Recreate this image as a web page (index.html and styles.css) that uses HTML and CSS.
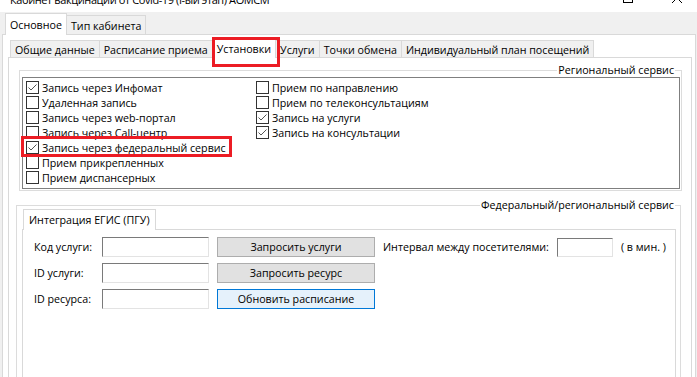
FILE: index.html
```html
<!DOCTYPE html>
<html lang="ru">
<head>
    <meta charset="UTF-8">
    <meta name="viewport" content="width=device-width, initial-scale=1.0">
    <title>Кабинет вакцинации от Covid-19</title>
    <link rel="stylesheet" href="styles.css">
</head>
<body>
    <!-- Заголовок окна (виден только низ) -->
    <div class="titlebar">
        <span class="title">Кабинет вакцинации от Covid-19 (I-ый этап) АОМСМ</span>
        <span class="controls">
            <svg class="ctl" width="10" height="10" viewBox="0 0 10 10"><rect x="0.5" y="0.5" width="9" height="9" fill="none" stroke="#000"/></svg>
            <svg class="ctl close" width="10" height="10" viewBox="0 0 10 10"><path d="M0 0L10 10M10 0L0 10" stroke="#000" fill="none"/></svg>
        </span>
    </div>

    <div class="window">
        <div class="tabstrip outer-tabs">
            <div class="tab active">Основное</div>
            <div class="tab">Тип кабинета</div>
        </div>

        <div class="outer-page">
            <div class="tabstrip inner-tabs">
                <div class="tab">Общие данные</div>
                <div class="tab">Расписание приема</div>
                <div class="tab active marked">Установки</div>
                <div class="tab">Услуги</div>
                <div class="tab">Точки обмена</div>
                <div class="tab">Индивидуальный план посещений</div>
            </div>

            <div class="inner-page">
                <!-- Региональный сервис -->
                <fieldset class="group regional">
                    <legend>Региональный сервис</legend>
                    <div class="checklist">
                        <div class="item"><span class="cb"><svg width="11" height="11" viewBox="0 0 11 11"><path d="M1.5 5.5L4 8L9.5 2.5" fill="none" stroke="#555"/></svg></span>Запись через Инфомат</div>
                        <div class="item"><span class="cb"></span>Удаленная запись</div>
                        <div class="item"><span class="cb"></span>Запись через web-портал</div>
                        <div class="item"><span class="cb"></span>Запись через Call-центр</div>
                        <div class="item marked"><span class="cb"><svg width="11" height="11" viewBox="0 0 11 11"><path d="M1.5 5.5L4 8L9.5 2.5" fill="none" stroke="#555"/></svg></span>Запись через федеральный сервис</div>
                        <div class="item"><span class="cb"></span>Прием прикрепленных</div>
                        <div class="item"><span class="cb"></span>Прием диспансерных</div>
                        <div class="item"><span class="cb"></span>Прием по направлению</div>
                        <div class="item"><span class="cb"></span>Прием по телеконсультациям</div>
                        <div class="item"><span class="cb"><svg width="11" height="11" viewBox="0 0 11 11"><path d="M1.5 5.5L4 8L9.5 2.5" fill="none" stroke="#555"/></svg></span>Запись на услуги</div>
                        <div class="item"><span class="cb"><svg width="11" height="11" viewBox="0 0 11 11"><path d="M1.5 5.5L4 8L9.5 2.5" fill="none" stroke="#555"/></svg></span>Запись на консультации</div>
                    </div>
                </fieldset>

                <!-- Федеральный/региональный сервис -->
                <fieldset class="group federal">
                    <legend>Федеральный/региональный сервис</legend>
                    <div class="tabstrip egis-tabs">
                        <div class="tab active">Интеграция ЕГИС (ПГУ)</div>
                    </div>
                    <div class="egis-page">
                        <div class="form-grid">
                            <label for="kod">Код услуги:</label>
                            <input type="text" id="kod" class="tb">
                            <button class="btn">Запросить услуги</button>
                            <label for="interval">Интервал между посетителями:</label>
                            <input type="text" id="interval" class="tb small">
                            <span>( в мин. )</span>

                            <label for="idusl">ID услуги:</label>
                            <input type="text" id="idusl" class="tb">
                            <button class="btn">Запросить ресурс</button>
                            <span></span><span></span><span></span>

                            <label for="idres">ID ресурса:</label>
                            <input type="text" id="idres" class="tb">
                            <button class="btn focused">Обновить расписание</button>
                        </div>
                    </div>
                </fieldset>
            </div>
        </div>
    </div>
</body>
</html>
```

FILE: styles.css
```css
body {
    margin: 0;
    background: #f0f0f0;
    font-family: "Open Sans", "Noto Sans", sans-serif;
    font-size: 10.7px;
    color: #000;
    overflow: hidden;
}
.titlebar {
    height: 12px;
    background: #fff;
    display: flex;
    overflow: hidden;
}
.titlebar .title {
    font-size: 11px;
    letter-spacing: -0.4px;
    line-height: 16px;
    margin-top: -8px;
    padding-left: 10px;
    white-space: nowrap;
}
.controls {
    margin-left: auto;
    margin-right: 15px;
    display: flex;
    gap: 39px;
}
.ctl {
    margin-top: -7px;
}
.window {
    padding: 1px 1px 0 2px;
}
.tabstrip {
    display: flex;
    align-items: flex-end;
}
.tab {
    box-sizing: border-box;
    border: 1px solid #d9d9d9;
    border-bottom: none;
    background: #f0f0f0;
    padding: 1px 4px 0;
    margin-right: -1px;
    white-space: nowrap;
    display: flex;
    align-items: center;
}
.tab.active {
    background: #fff;
    position: relative;
    z-index: 1;
    margin-bottom: -1px;
    padding-top: 0;
}
.outer-tabs {
    padding-left: 3px;
}
.outer-tabs .tab {
    height: 19px;
}
.outer-tabs .tab.active {
    height: 22px;
}
.inner-tabs {
    padding-left: 2px;
    padding-top: 2px;
}
.inner-tabs .tab {
    height: 17px;
}
.inner-tabs .tab.active {
    height: 20px;
}
.tab.marked::after {
    content: "";
    position: absolute;
    left: -1px;
    top: -2px;
    width: 68px;
    height: 30px;
    box-sizing: border-box;
    border: 3px solid #ec1c24;
}
.outer-page {
    border: 1px solid #d9d9d9;
    background: #fff;
    padding: 1px 3px 0 5px;
    height: 400px;
}
.inner-page {
    border: 1px solid #d9d9d9;
    background: #fff;
    height: 380px;
    overflow: hidden;
}
.group {
    border: 1px solid #dcdcdc;
    min-width: 0;
}
.group legend {
    margin-left: auto;
    padding: 0 1px;
    line-height: 7px;
    white-space: nowrap;
}
.regional {
    margin: 9px 9px 0 10px;
    padding: 3px 1px 1px 2px;
}
.regional legend {
    margin-right: 5px;
}
.checklist {
    box-sizing: border-box;
    height: 112px;
    border: 1px solid #7f7f7f;
    background: #fff;
    padding: 2px 0 0 3px;
    display: grid;
    grid-auto-flow: column;
    grid-template-rows: repeat(7, 15px);
    grid-template-columns: 230px 230px;
    align-content: start;
}
.item {
    display: flex;
    align-items: center;
    gap: 3px;
    white-space: nowrap;
}
.item.marked {
    position: relative;
}
.item.marked::after {
    content: "";
    position: absolute;
    left: -5px;
    top: -4px;
    width: 211px;
    height: 21px;
    box-sizing: border-box;
    border: 3px solid #ec1c24;
}
.cb {
    flex: none;
    box-sizing: border-box;
    width: 13px;
    height: 13px;
    border: 1px solid #333;
    background: #fff;
    display: flex;
}
.federal {
    margin: 11px 10px 0 7px;
    padding: 0 4px 0 5px;
}
.federal legend {
    margin-right: 1px;
}
.egis-tabs {
    padding-left: 1px;
}
.egis-tabs .tab {
    padding: 0 5px;
}
.egis-tabs .tab.active {
    height: 21px;
}
.egis-page {
    border: 1px solid #d9d9d9;
    background: #fff;
    padding: 7px 0 0 11px;
    height: 200px;
}
.form-grid {
    display: grid;
    grid-template-columns: 60px 107px 158px auto 56px auto;
    grid-auto-rows: 20px;
    column-gap: 8px;
    row-gap: 6px;
    align-items: center;
    justify-content: start;
}
.tb {
    box-sizing: border-box;
    width: 107px;
    height: 20px;
    margin: 0;
    border: 1px solid;
    border-color: #7a7a7a #e3e3e3 #e3e3e3 #7a7a7a;
    background: #fff;
    font: inherit;
}
.tb.small {
    width: 56px;
    height: 19px;
}
.btn {
    box-sizing: border-box;
    height: 20px;
    margin: 0;
    padding: 0;
    border: 1px solid #adadad;
    background: #e1e1e1;
    font: inherit;
    color: #000;
}
.btn.focused {
    background: #e5f1fb;
    border-color: #0078d7;
}
```
